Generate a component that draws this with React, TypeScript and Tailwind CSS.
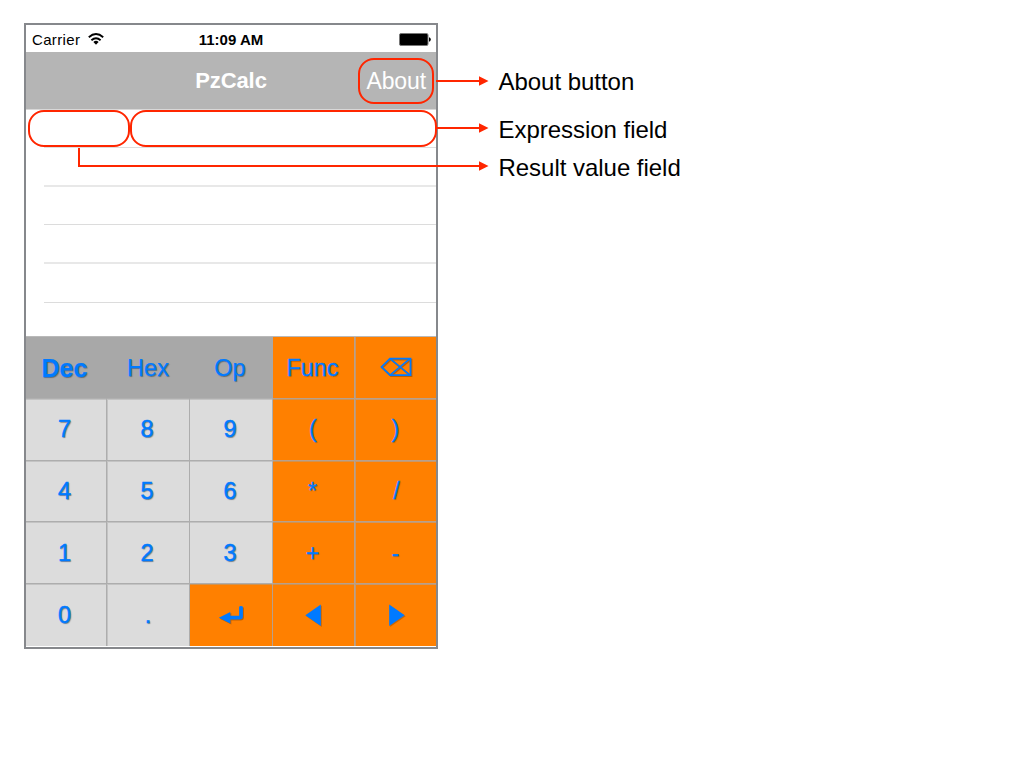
import React from "react";

type Key = { id: string; label?: React.ReactNode; tone: "mode" | "digit" | "action"; className?: string };

const DeleteIcon = () => (
  <svg width="34" height="22" viewBox="0 0 34 22" fill="none" stroke="#007aff" strokeWidth="1.8" className="-mt-0.5 drop-shadow-[1px_1px_0.5px_rgba(0,0,0,0.25)]">
    <path d="M11 2.7H31.5V19.2H11L2.5 10.9Z" />
    <path d="M11 2.7L31 19.2M11 19.2L31 2.7" strokeWidth="1.5" />
  </svg>
);

const ReturnIcon = () => (
  <svg width="26" height="20" viewBox="0 0 26 20" className="-mt-0.5 drop-shadow-[1px_1px_0.5px_rgba(0,0,0,0.25)]">
    <path d="M0.8 12.7L12.3 6.9V10.8H21.1V2.2Q21.1 1 23 1T24.9 2.2V11.3Q24.9 14.6 21.7 14.6H12.3V18.5Z" fill="#007aff" />
  </svg>
);

const Triangle = ({ flip = false }: { flip?: boolean }) => (
  <svg width="16" height="23" viewBox="0 0 16 23" className={`-mt-0.5 drop-shadow-[1px_1px_0.5px_rgba(0,0,0,0.2)] ${flip ? "ml-0.5" : "mr-0.5"}`}>
    <path d={flip ? "M0.2 0.5V22L15.7 11.2Z" : "M15.8 0.5V22L0.3 11.2Z"} fill="#007aff" />
  </svg>
);

const keys: Key[] = [
  { id: "dec", label: "Dec", tone: "mode", className: "font-bold text-[25px] pr-[3px]" },
  { id: "hex", label: "Hex", tone: "mode" },
  { id: "op", label: "Op", tone: "mode", className: "pr-0.5" },
  { id: "func", label: "Func", tone: "action", className: "pr-0.5" },
  { id: "delete", label: <DeleteIcon />, tone: "action" },
  { id: "7", label: "7", tone: "digit", className: "pr-[3px]" },
  { id: "8", label: "8", tone: "digit", className: "pr-0.5" },
  { id: "9", label: "9", tone: "digit", className: "pr-0.5" },
  { id: "open", label: "(", tone: "action", className: "pr-px" },
  { id: "close", label: ")", tone: "action" },
  { id: "4", label: "4", tone: "digit", className: "pr-[3px]" },
  { id: "5", label: "5", tone: "digit", className: "pr-0.5" },
  { id: "6", label: "6", tone: "digit", className: "pr-0.5" },
  { id: "times", label: "*", tone: "action", className: "pr-0.5" },
  { id: "divide", label: "/", tone: "action", className: "pl-0.5" },
  { id: "1", label: "1", tone: "digit", className: "pr-[3px]" },
  { id: "2", label: "2", tone: "digit", className: "pr-0.5" },
  { id: "3", label: "3", tone: "digit", className: "pr-0.5" },
  { id: "plus", label: "+", tone: "action", className: "pr-0.5" },
  { id: "minus", label: "-", tone: "action" },
  { id: "0", label: "0", tone: "digit", className: "pr-[3px]" },
  { id: "dot", label: ".", tone: "digit" },
  { id: "return", label: <ReturnIcon />, tone: "action" },
  { id: "left", label: <Triangle />, tone: "action" },
  { id: "right", label: <Triangle flip />, tone: "action" },
];

const tones = {
  mode: "bg-[#a8a8a8] border-b-[#b0b0b0] border-r-[#a8a8a8] [-webkit-text-stroke:0.25px_#007aff] [text-shadow:1px_1px_1px_rgba(0,0,0,0.35)]",
  digit: "bg-[#dcdcdc] border-[#adadad] [-webkit-text-stroke:0.5px_#007aff] [text-shadow:1px_1px_1px_rgba(0,0,0,0.4)]",
  action: "bg-[#ff8000] border-[#b8a08c] [-webkit-text-stroke:0.3px_#007aff] [text-shadow:1px_1px_1px_rgba(0,0,0,0.22)]",
};

const topEdges = {
  mode: "",
  digit: "shadow-[inset_0_1px_0_#c3c3c3]",
  action: "shadow-[inset_0_1px_0_#d0924f]",
};

const cornerEdges = {
  mode: "",
  digit: "shadow-[inset_1px_1px_0_#c3c3c3]",
  action: "shadow-[inset_1px_1px_0_#c8986a]",
};

function edges(key: Key, index: number) {
  if (index === 4) return "shadow-[inset_1px_0_0_#c8986a]";
  if (index < 4) return "";
  return index % 5 === 1 || index % 5 === 4 ? cornerEdges[key.tone] : topEdges[key.tone];
}

function StatusBar() {
  return (
    <div className="grid h-[27px] shrink-0 grid-cols-3 items-center pt-0.5 text-[15px] text-black">
      <div className="flex items-center gap-2 pl-1.5">
        <span className="pt-px tracking-[0.35px]">Carrier</span>
        <svg width="16" height="12" viewBox="0 0 16 12" fill="none" stroke="#000" strokeWidth="1.9" className="-mt-0.5">
          <path d="M0.8 4.2Q8 -2 15.2 4.2" />
          <path d="M3.4 7.2Q8 3.2 12.6 7.2" />
          <path d="M5.4 8.9Q8 6.6 10.6 8.9L8 11.8Z" fill="#000" stroke="none" />
        </svg>
      </div>
      <span className="whitespace-nowrap pt-px text-center text-[15px] font-bold">11:09 AM</span>
      <svg width="32" height="13" viewBox="0 0 32 13" className="mr-[5px] justify-self-end">
        <rect x="0.5" y="0.5" width="28.5" height="12" rx="1.5" fill="#000" stroke="#777" />
        <path d="M30 4.3Q31.8 4.8 31.8 6.5T30 8.7Z" fill="#000" />
      </svg>
    </div>
  );
}

function Phone() {
  return (
    <div className="flex h-[626px] w-[414px] shrink-0 flex-col border-2 border-[#86888c] bg-white">
      <StatusBar />
      <div className="grid h-[58px] shrink-0 grid-cols-[1fr_auto_1fr] items-center border-b border-[#d8d8d8] bg-[#b5b5b5] text-white">
        <span />
        <h1 className="text-[22px] font-bold -tracking-[0.1px]">PzCalc</h1>
        <button className="justify-self-end pr-2.5 pt-px text-[23px] -tracking-[0.1px]">About</button>
      </div>
      <div className="flex h-[226px] shrink-0 flex-col pl-[18px]">
        <div className="h-[38px] shrink-0 border-b border-[#dedede]" />
        <div className="h-[39px] shrink-0 border-b-2 border-[#e8e8e8]" />
        <div className="h-[38px] shrink-0 border-b border-[#dcdcdc]" />
        <div className="h-[39px] shrink-0 border-b-2 border-[#e8e8e8]" />
        <div className="h-[39px] shrink-0 border-b border-[#dcdcdc]" />
      </div>
      <div className="grid h-[310px] shrink-0 grid-cols-[81px_83px_83px_82px_81px] grid-rows-5 border-t border-[#b9b9b9]">
        {keys.map((key, index) => (
          <button
            key={key.id}
            className={`flex items-center justify-center pt-0.5 leading-none text-[#007aff] ${index < 20 ? "border-b" : ""} ${index % 5 === 4 ? "" : "border-r"} ${tones[key.tone]} ${edges(key, index)} ${key.id === "dec" ? "" : "text-[23.5px]"} ${key.className ?? ""}`}
          >
            {key.label}
          </button>
        ))}
      </div>
    </div>
  );
}

export default function App() {
  return (
    <main className="relative flex h-[768px] w-[1024px] items-start overflow-hidden bg-white pl-6 pt-[23px] font-['Liberation_Sans',Arial,sans-serif]">
      <Phone />
      <div className="flex flex-col pl-[60.5px] pt-[43px] text-[24px] leading-8 -tracking-[0.03px] text-black">
        <span className="mb-4">About button</span>
        <span className="mb-1.5">Expression field</span>
        <span>Result value field</span>
      </div>
      <svg className="pointer-events-none absolute left-0 top-0" width="1024" height="768" fill="none" stroke="#ff2600" strokeWidth="2">
        <rect x="359" y="59" width="74" height="44" rx="15" />
        <rect x="29" y="111" width="100" height="35" rx="15" />
        <rect x="131" y="111" width="305" height="35" rx="15" />
        <path d="M436 81H480M437 128H480M79 148V166H480" />
        <path d="M479 76.3L488.5 81L479 85.7ZM479 123.3L488.5 128L479 132.7ZM479 161.3L488.5 166L479 170.7Z" fill="#ff2600" stroke="none" />
      </svg>
    </main>
  );
}
